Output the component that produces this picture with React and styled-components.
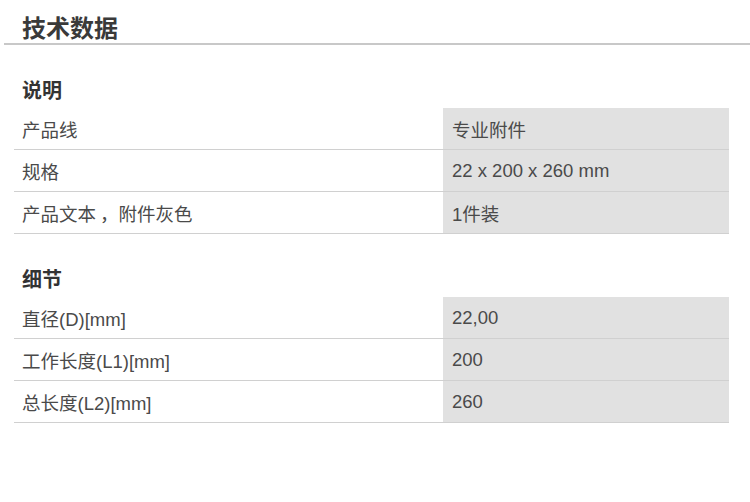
import React from 'react';
import styled, { createGlobalStyle } from 'styled-components';

const GlobalStyle = createGlobalStyle`
  body {
    margin: 0;
    background: #ffffff;
    font-family: "Liberation Sans", "Noto Sans CJK SC", sans-serif;
    color: #444444;
  }
`;

const Page = styled.div`
  width: 750px;
  padding-top: 14px;
`;

const Header = styled.div`
  margin-left: 4px;
  padding-left: 18px;
  border-bottom: 2px solid #c8c8c8;
`;

const Title = styled.h1`
  margin: 0;
  font-size: 24px;
  line-height: 29px;
  font-weight: bold;
  color: #3a3a3a;
`;

const Section = styled.section`
  margin: 34px 21px 0 14px;
`;

const SectionTitle = styled.h2`
  margin: 0 0 5px;
  padding-left: 8px;
  font-size: 20px;
  line-height: 24px;
  font-weight: bold;
  color: #333333;
`;

const Table = styled.div`
  display: flex;
  flex-direction: column;
`;

const Row = styled.div`
  display: grid;
  grid-template-columns: 429px 1fr;
  height: 42px;
  border-bottom: 1px solid #d0d0d0;
  box-sizing: border-box;
`;

const Cell = styled.div`
  display: flex;
  align-items: center;
  padding-left: ${p => (p.$value ? '9px' : '8px')};
  background: ${p => (p.$value ? '#e1e1e1' : 'transparent')};
  font-size: 18.5px;
  color: #4a4a4a;
  white-space: nowrap;
`;

// full-width comma sits further right in the reference
const Punct = styled.span`
  padding-left: 4px;
`;

const sections = [
  {
    title: '说明',
    rows: [
      ['产品线', '专业附件'],
      ['规格', '22 x 200 x 260 mm'],
      [<>产品文本<Punct>，</Punct>附件灰色</>, '1件装'],
    ],
  },
  {
    title: '细节',
    rows: [
      ['直径(D)[mm]', '22,00'],
      ['工作长度(L1)[mm]', '200'],
      ['总长度(L2)[mm]', '260'],
    ],
  },
];

export default function App() {
  return (
    <Page>
      <GlobalStyle />
      <Header>
        <Title>技术数据</Title>
      </Header>
      {sections.map(section => (
        <Section key={section.title}>
          <SectionTitle>{section.title}</SectionTitle>
          <Table>
            {section.rows.map(([label, value]) => (
              <Row key={value}>
                <Cell>{label}</Cell>
                <Cell $value>{value}</Cell>
              </Row>
            ))}
          </Table>
        </Section>
      ))}
    </Page>
  );
}
